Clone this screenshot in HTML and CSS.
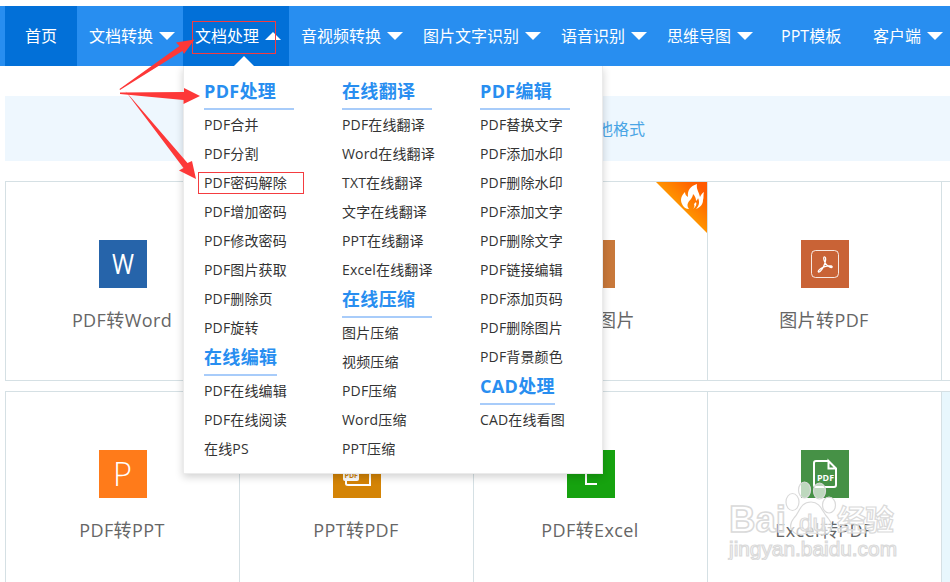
FILE: index.html
```
<!DOCTYPE html>
<html lang="zh-CN">
<head>
  <meta charset="UTF-8">
  <meta name="viewport" content="width=device-width, initial-scale=1.0">
  <title>PDF在线转换</title>
  <link rel="stylesheet" href="styles.css">
</head>
<body>

<header class="nav">
  <a class="nav-item home">首页</a>
  <a class="nav-item has-menu">文档转换<i class="arrow"></i></a>
  <div class="nav-item has-menu open">文档处理<i class="arrow up"></i>
    <div class="dropdown">
      <div class="col">
        <h3>PDF处理</h3>
        <a>PDF合并</a>
        <a>PDF分割</a>
        <a>PDF密码解除</a>
        <a>PDF增加密码</a>
        <a>PDF修改密码</a>
        <a>PDF图片获取</a>
        <a>PDF删除页</a>
        <a>PDF旋转</a>
        <h3>在线编辑</h3>
        <a>PDF在线编辑</a>
        <a>PDF在线阅读</a>
        <a>在线PS</a>
      </div>
      <div class="col">
        <h3>在线翻译</h3>
        <a>PDF在线翻译</a>
        <a>Word在线翻译</a>
        <a>TXT在线翻译</a>
        <a>文字在线翻译</a>
        <a>PPT在线翻译</a>
        <a>Excel在线翻译</a>
        <h3 class="wide">在线压缩</h3>
        <a>图片压缩</a>
        <a>视频压缩</a>
        <a>PDF压缩</a>
        <a>Word压缩</a>
        <a>PPT压缩</a>
      </div>
      <div class="col">
        <h3>PDF编辑</h3>
        <a>PDF替换文字</a>
        <a>PDF添加水印</a>
        <a>PDF删除水印</a>
        <a>PDF添加文字</a>
        <a>PDF删除文字</a>
        <a>PDF链接编辑</a>
        <a>PDF添加页码</a>
        <a>PDF删除图片</a>
        <a>PDF背景颜色</a>
        <h3>CAD处理</h3>
        <a>CAD在线看图</a>
      </div>
    </div>
  </div>
  <a class="nav-item has-menu">音视频转换<i class="arrow"></i></a>
  <a class="nav-item has-menu">图片文字识别<i class="arrow"></i></a>
  <a class="nav-item has-menu">语音识别<i class="arrow"></i></a>
  <a class="nav-item has-menu">思维导图<i class="arrow"></i></a>
  <a class="nav-item plain">PPT模板</a>
  <a class="nav-item has-menu last">客户端<i class="arrow"></i></a>
</header>

<main>
  <div class="tabs"><a>其他格式</a></div>

  <div class="row">
    <div class="card">
      <svg class="icon word" viewBox="0 0 48 48"><text x="13" y="34" font-size="28" textLength="22" lengthAdjust="spacingAndGlyphs">W</text></svg>
      <p>PDF转Word</p>
    </div>
    <div class="card"></div>
    <div class="card">
      <svg class="hot" viewBox="0 0 51 51">
        <defs>
          <linearGradient id="fire" x1="0.25" y1="0.75" x2="1" y2="0">
            <stop offset="0.2" stop-color="#ffa200"/>
            <stop offset="0.85" stop-color="#ff5a00"/>
          </linearGradient>
        </defs>
        <path d="M0 0H51V51Z" fill="url(#fire)"/>
        <path fill="#fff" d="M41 2C34 4 31 9 32 15C30 14 29 12 29 10C25 14 24 18 26 22C27 25 30 27 33 27C30 23 32 20 35 17C36 15 37 14 37 12C39 14 40 16 40 19C41 18 42 17 42 16C44 20 43 24 40 27C45 25 47 22 47 18C48 15 47 13 48 10C46 11 45 13 44 15C43 10 40 7 41 2ZM37 27C40 25 41 22 40 20L38 22C39 24 38 26 37 27Z"/>
      </svg>
      <svg class="icon image" viewBox="0 0 48 48"></svg>
      <p>PDF转图片</p>
    </div>
    <div class="card">
      <svg class="icon acrobat" viewBox="0 0 48 48">
        <g fill="none" stroke="#fff">
          <rect x="10.5" y="10.5" width="27" height="27" rx="4" stroke-opacity=".85"/>
          <path stroke-width="1.3" d="M24 17C21.800 16.200 22.800 21 24.500 23.500C26.500 26.500 31 28.500 31.200 27C31.300 25 25.500 25.800 21.500 27.500C18.500 29 16.500 31.500 17.500 32C19.500 32.500 22.500 27.500 23.800 23.500C24.800 20.500 25 17.300 24 17Z"/>
        </g>
      </svg>
      <p>图片转PDF</p>
    </div>
    <div class="card rest"></div>
  </div>

  <div class="row">
    <div class="card">
      <svg class="icon ppt" viewBox="0 0 48 48"><text x="14" y="36" font-size="33" textLength="19" lengthAdjust="spacingAndGlyphs">P</text></svg>
      <p>PDF转PPT</p>
    </div>
    <div class="card">
      <svg class="icon ppt-pdf" viewBox="0 0 48 48">
        <path fill="none" stroke="#fff" stroke-width="2" d="M13 30V33.500Q13 35 15 35H37V11H13V20"/>
        <rect x="10" y="20" width="16" height="11" rx="2" fill="#fff"/>
        <text class="tiny dark" x="11.500" y="27.500" font-size="7">PDF</text>
      </svg>
      <p>PPT转PDF</p>
    </div>
    <div class="card">
      <svg class="icon excel" viewBox="0 0 48 48"><path fill="none" stroke="#fff" stroke-width="2" d="M30 12H19V34H30M19 23H29"/></svg>
      <p>PDF转Excel</p>
    </div>
    <div class="card">
      <svg class="icon excel-pdf" viewBox="0 0 48 48">
        <path fill="none" stroke="#fff" stroke-width="2" d="M27.500 11H15Q13 11 13 13V35Q13 37 15 37H33Q35 37 35 35V18.500L27.500 11V18.500H35"/>
        <text class="tiny" x="16" y="30.500" font-size="8.500" textLength="17" lengthAdjust="spacingAndGlyphs">PDF</text>
      </svg>
      <p>Excel转PDF</p>
    </div>
    <div class="card rest active"></div>
  </div>
</main>

<!-- watermark -->
<svg class="watermark" viewBox="0 0 180 90">
  <g class="mark">
    <text class="thick" x="9" y="62" font-size="36" textLength="57" lengthAdjust="spacingAndGlyphs">Bai</text>
    <text class="cn" x="117" y="61" font-size="29" textLength="57">经验</text>
    <text x="9" y="86" font-size="21" textLength="168" lengthAdjust="spacingAndGlyphs">jingyan.baidu.com</text>
    <path d="M91 32C80 32 80 42 74 48C66 58 74 66 83 64Q91 62 99 64C110 66 116 58 108 48C102 42 101 32 91 32Z"/>
    <ellipse cx="72.500" cy="32" rx="6.500" ry="8.500"/>
    <ellipse cx="84.500" cy="20" rx="6" ry="8"/>
    <ellipse cx="99.500" cy="21" rx="6" ry="8"/>
    <ellipse cx="109" cy="35" rx="6.500" ry="8"/>
    <text x="79" y="61" font-size="24" textLength="27" lengthAdjust="spacingAndGlyphs">du</text>
  </g>
</svg>

<!-- step marks -->
<div class="box box-nav"></div>
<div class="box box-item"></div>
<svg class="pointers" viewBox="0 0 210 190">
  <path d="M119.500 89L179.500 46L176 42.500L194.500 39.500L184 54L182.500 51L120 90Z"/>
  <path d="M120 92.500L184 92L184 88L200 96L183.500 104V100L120 94Z"/>
  <path d="M125 90.500L187.500 163L192 161L196 179L179 170.500L183.500 168Z"/>
</svg>

</body>
</html>
```
FILE: styles.css
```
* {
  box-sizing: border-box;
}

body {
  margin: 0;
  padding-top: 6px;
  height: 582px;
  overflow: hidden;
  position: relative;
  background: #fff;
  font-family: "Open Sans", "Noto Sans CJK SC", sans-serif;
}

.nav {
  display: flex;
  height: 60px;
  padding-left: 5px;
  background: #288ef0;
}

.nav-item {
  flex: none;
  height: 60px;
  line-height: 60px;
  font-size: 16px;
  color: #fff;
  white-space: nowrap;
}

.home {
  padding: 0 20px;
  background: #0270d8;
}

.plain {
  width: 100px;
  text-align: center;
}

.has-menu {
  display: flex;
  align-items: center;
  padding: 0 8px 0 12px;
}

.last {
  padding-right: 0;
}

.open {
  position: relative;
  background: #0270d8;
}

.open::after {
  content: "";
  position: absolute;
  bottom: 0;
  left: 51px;
  border: 10px solid transparent;
  border-top: 0;
  border-bottom-color: #fff;
}

.arrow {
  margin-left: 6px;
  border: 8px solid transparent;
  border-top-color: #fff;
  border-bottom: 0;
}

.arrow.up {
  border-top: 0;
  border-bottom: 8px solid #fff;
}

.dropdown {
  position: absolute;
  top: 60px;
  left: 0;
  z-index: 5;
  display: flex;
  width: 420px;
  height: 408px;
  padding: 10px 0 0 20px;
  background: #fff;
  border: 1px solid #ebebeb;
  border-top: 0;
  box-shadow: 0 3px 8px rgba(0, 0, 0, 0.18);
  clip-path: inset(0 -12px -12px -12px);
}

.col {
  flex: 0 0 138px;
}

.col:last-child {
  flex-basis: 110px;
}

.col h3 {
  width: fit-content;
  height: 34px;
  margin: 0;
  line-height: 30px;
  font-size: 18px;
  font-weight: 700;
  letter-spacing: 0.3px;
  color: #288ef0;
  border-bottom: 2px solid #a8ccfa;
}

.col h3:first-child,
.col h3.wide {
  width: 90px;
}

.col a {
  display: block;
  height: 29px;
  line-height: 29px;
  font-size: 14px;
  letter-spacing: 0.15px;
  color: #333;
}

.tabs {
  height: 65px;
  margin: 30px 0 20px 5px;
  padding-left: 576px;
  line-height: 67px;
  font-size: 16px;
  color: #4aa5e5;
  background: #eef7fe;
}

.row {
  display: flex;
  height: 200px;
  margin: 0 0 10px 5px;
  border: 1px solid #d5e0e4;
  border-right: 0;
}

.card {
  position: relative;
  flex: none;
  width: 234px;
  padding: 58px 0 0 1px;
  border-right: 1px solid #d5e0e4;
  text-align: center;
}

.card.rest {
  flex: 1;
  width: auto;
  border-right: 0;
}

.card.active {
  background: #e8f7fd;
}

.card p {
  margin: 17px 2px 0 0;
  line-height: 30px;
  font-size: 18px;
  letter-spacing: 0.4px;
  color: #666;
}

.icon {
  display: block;
  width: 48px;
  height: 48px;
  margin: 0 auto;
  fill: #fff;
  font-weight: 300;
}

.word {
  background: #2664aa;
  font-weight: 400;
}

.image { background: #c8783a; }
.acrobat { background: #c96336; }
.ppt { background: #ff7b1a; }
.ppt-pdf { background: #d48406; }
.excel { background: #16a20f; }
.excel-pdf { background: #469146; }

.tiny {
  font-weight: 700;
}

.dark {
  fill: #d48406;
}

.hot {
  position: absolute;
  top: 0;
  right: 0;
  width: 51px;
  height: 51px;
}

.watermark {
  position: absolute;
  left: 720px;
  top: 470px;
  width: 180px;
  height: 90px;
}

.mark {
  font-family: "Liberation Sans", sans-serif;
  fill: rgba(255, 255, 255, 0.65);
  stroke: #dadada;
  stroke-width: 1.2;
}

.mark .thick {
  font-weight: 700;
  stroke-width: 1.5;
}

.mark .cn {
  font-family: "Noto Sans CJK SC", sans-serif;
  font-weight: 700;
}

.box {
  position: absolute;
  z-index: 10;
  border: 1px solid #f43c40;
}

.box-nav {
  left: 192px;
  top: 21px;
  width: 84px;
  height: 33px;
}

.box-item {
  left: 198px;
  top: 172px;
  width: 106px;
  height: 22px;
}

.pointers {
  position: absolute;
  left: 0;
  top: 0;
  z-index: 10;
  width: 210px;
  height: 190px;
  fill: #fd3838;
}
```
